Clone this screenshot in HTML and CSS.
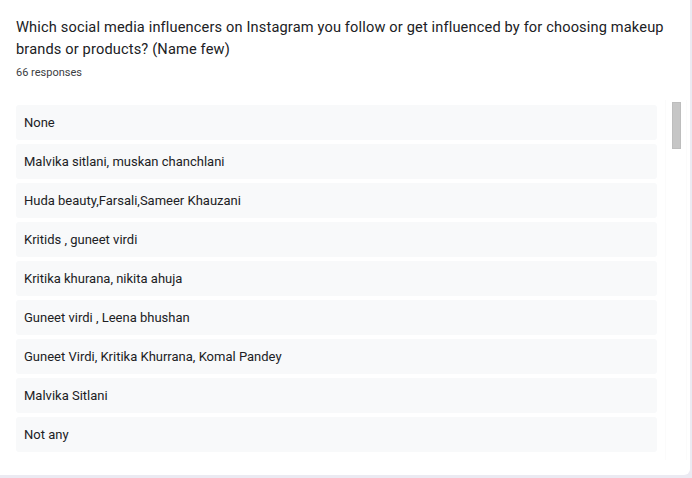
FILE: index.html
```html
<!DOCTYPE html>
<html>
<head>
<meta charset="utf-8">
<link rel="stylesheet" href="styles.css">
</head>
<body>
<div class="card">
  <h1 class="title">Which social media influencers on Instagram you follow or get influenced by for choosing makeup brands or products? (Name few)</h1>
  <div class="count">66 responses</div>
  <div class="list-wrap">
    <div class="list">
      <div class="row">None</div>
      <div class="row">Malvika sitlani, muskan chanchlani</div>
      <div class="row">Huda beauty,Farsali,Sameer Khauzani</div>
      <div class="row">Kritids , guneet virdi</div>
      <div class="row">Kritika khurana, nikita ahuja</div>
      <div class="row">Guneet virdi , Leena bhushan</div>
      <div class="row">Guneet Virdi, Kritika Khurrana, Komal Pandey</div>
      <div class="row">Malvika Sitlani</div>
      <div class="row">Not any</div>
    </div>
    <div class="scroll-track"><div class="scroll-thumb"></div></div>
  </div>
</div>
</body>
</html>
```

FILE: styles.css
```css
html, body {
  margin: 0;
  padding: 0;
  background: #ebeaf2;
}
body {
  width: 692px;
  height: 478px;
  overflow: hidden;
}
.card {
  background: #ffffff;
  width: 690px;
  height: 475px;
  box-sizing: border-box;
  border-bottom-right-radius: 6px;
  padding: 16px 0 0 16px;
  font-family: Roboto, "Open Sans", sans-serif;
  color: #202124;
}
.title {
  margin: 0;
  font-size: 14.6px;
  font-weight: 400;
  line-height: 22px;
  letter-spacing: 0.15px;
  width: 660px;
  color: #202124;
}
.count {
  font-size: 11px;
  line-height: 16px;
  margin-top: 5px;
  color: #3c4043;
}
.list-wrap {
  display: flex;
  margin-top: 24px;
}
.list {
  display: flex;
  flex-direction: column;
  gap: 4px;
  width: 641px;
}
.row {
  background: #f8f9fa;
  border-radius: 3px;
  height: 35px;
  line-height: 35px;
  padding-left: 8px;
  font-size: 13px;
  color: #202124;
}
.scroll-track {
  margin-left: 8px;
  width: 22px;
  height: 360px;
  margin-top: -5px;
  box-sizing: border-box;
  border-left: 1px solid #fbfbfb;
  border-right: 1px solid #fbfbfb;
  padding: 2px 0 0 6px;
}
.scroll-thumb {
  width: 9px;
  height: 47px;
  background: #c6c6c6;
  border: 1px solid #bdbdbd;
  box-sizing: border-box;
}
```
